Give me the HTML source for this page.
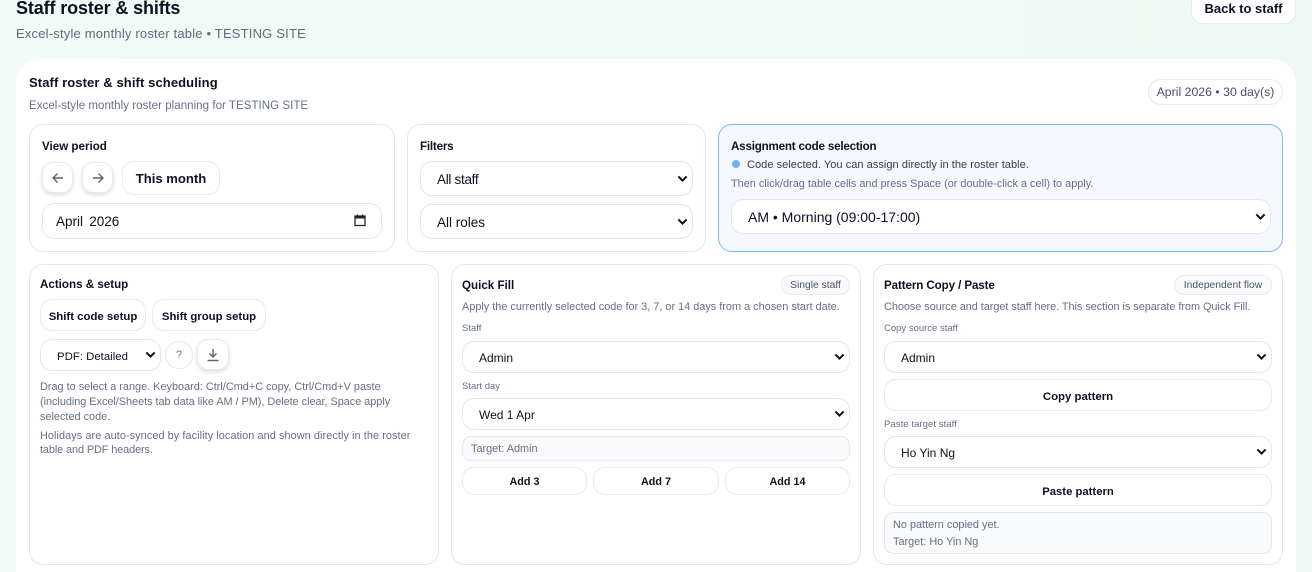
<!DOCTYPE html>
<html><head><meta charset="utf-8"><style>
html,body{margin:0;padding:0;width:1312px;height:572px;overflow:hidden;background:#eff9f6;font-family:"Liberation Sans",sans-serif;color:#0b1220}
#w{position:absolute;left:0;top:0;width:1312px;height:572px;overflow:hidden;background:linear-gradient(90deg,#f1fbf8,#edf9f4)}
.a,.t,.b,.s{position:absolute;box-sizing:border-box}
.t{white-space:nowrap;line-height:16px}
.card{position:absolute;box-sizing:border-box;background:#fff;border:1px solid #e6e8ed;border-radius:14px}
.b{background:#fff;border:1px solid #e8eaef;text-align:center;white-space:nowrap;font-weight:600}
.s{background:#fff;border:1px solid #e6e8ed;white-space:nowrap}
.s svg{position:absolute;top:50%;margin-top:-4px;right:4px;width:11px;height:7.500px}
.h{font-size:11.600px;font-weight:700;color:#0b1220}
.m{font-size:10.900px;color:#667085}
.l{font-size:9.500px;color:#667085}
.p{background:#f9fafb;font-weight:400;font-size:10.300px;line-height:19px;color:#475467}
</style></head><body><div id="w">
<div class="t" style="left:16px;top:-3px;font-size:18px;line-height:22px;font-weight:700;letter-spacing:-.13px;color:#0b1220">Staff roster &amp; shifts</div>
<div class="t" style="left:16px;top:26px;font-size:13px;letter-spacing:.19px;color:#5f6b7a">Excel-style monthly roster table • TESTING SITE</div>
<div class="b" style="left:1191px;top:-10px;width:105px;height:34px;border-radius:12px;font-size:13px;line-height:35px">Back to staff</div>

<div class="a" style="left:16px;top:59px;width:1280px;height:513px;background:#fff;border-radius:24px 24px 0 0"></div>
<div class="t" style="left:29px;top:75px;font-size:13px;letter-spacing:.1px;font-weight:700">Staff roster &amp; shift scheduling</div>
<div class="t" style="left:29px;top:98px;font-size:11.500px;letter-spacing:.05px;color:#667085">Excel-style monthly roster planning for TESTING SITE</div>
<div class="b" style="left:1148px;top:79px;width:135px;height:26px;border-radius:13px;font-size:12.300px;line-height:25px;font-weight:400;color:#475467">April 2026 • 30 day(s)</div>

<div class="card" style="left:29px;top:124px;width:366px;height:128px"></div>
<div class="t h" style="left:42px;top:139px">View period</div>
<div class="b" style="left:42px;top:162px;width:31px;height:31px;border-radius:11px;box-shadow:0 2px 4px rgba(16,24,40,.14)"><svg width="14" height="14" viewBox="0 0 14 14" style="position:absolute;left:8px;top:8px" fill="none" stroke="#5b6470" stroke-width="1.400"><path d="M12 7H2M6.500 2.500L2 7l4.500 4.500"/></svg></div>
<div class="b" style="left:82px;top:162px;width:31px;height:31px;border-radius:11px;box-shadow:0 2px 4px rgba(16,24,40,.14)"><svg width="14" height="14" viewBox="0 0 14 14" style="position:absolute;left:8px;top:8px" fill="none" stroke="#5b6470" stroke-width="1.400"><path d="M2 7h10M7.500 2.500L12 7l-4.500 4.500"/></svg></div>
<div class="b" style="left:122px;top:161px;width:98px;height:34px;border-radius:12px;font-size:13.100px;line-height:33px">This month</div>
<div class="s" style="left:42px;top:203px;width:340px;height:36px;border-radius:12px;font-size:13.500px;line-height:35px;padding-left:13px;word-spacing:2.500px">April 2026<svg viewBox="0 0 14 14" style="right:14px;margin-top:-8px;width:14px;height:14px" fill="none"><path d="M2 3h10v9.500H2z" stroke="#222" stroke-width="1.300"/><path d="M2 3h10v2.500H2z" fill="#222"/><path d="M4.500 1.500v2M9.500 1.500v2" stroke="#222" stroke-width="1.200"/></svg></div>

<div class="card" style="left:407px;top:124px;width:299px;height:128px"></div>
<div class="t h" style="left:420px;top:139px;letter-spacing:-.2px">Filters</div>
<div class="s" style="left:420px;top:161px;width:273px;height:35px;border-radius:12px;font-size:13.500px;letter-spacing:-.3px;line-height:36px;padding-left:16px">All staff<svg viewBox="0 0 12 8"><path d="M1.500 1.500L6 6l4.500-4.500" fill="none" stroke="#111" stroke-width="2.200"/></svg></div>
<div class="s" style="left:420px;top:204px;width:273px;height:35px;border-radius:12px;font-size:13.500px;line-height:35px;padding-left:16px">All roles<svg viewBox="0 0 12 8"><path d="M1.500 1.500L6 6l4.500-4.500" fill="none" stroke="#111" stroke-width="2.200"/></svg></div>

<div class="a" style="left:718px;top:124px;width:565px;height:128px;background:#f5f9fe;border:1px solid #7bb8f6;border-radius:14px"></div>
<div class="t h" style="left:731px;top:139px;letter-spacing:-.19px">Assignment code selection</div>
<div class="a" style="left:732px;top:160px;width:8px;height:8px;border-radius:50%;background:#6fb0f8"></div>
<div class="t" style="left:747px;top:157px;font-size:11.100px;color:#344054">Code selected. You can assign directly in the roster table.</div>
<div class="t m" style="left:731px;top:176px">Then click/drag table cells and press Space (or double-click a cell) to apply.</div>
<div class="s" style="left:731px;top:199px;width:540px;height:35px;border-radius:12px;font-size:14px;line-height:35px;padding-left:16px">AM • Morning (09:00-17:00)<svg viewBox="0 0 12 8"><path d="M1.500 1.500L6 6l4.500-4.500" fill="none" stroke="#111" stroke-width="2.200"/></svg></div>

<div class="card" style="left:29px;top:264px;width:410px;height:301px"></div>
<div class="t h" style="left:40px;top:277px">Actions &amp; setup</div>
<div class="b" style="left:40px;top:299px;width:106px;height:32px;border-radius:12px;font-size:11.400px;line-height:32px;padding-top:1px">Shift code setup</div>
<div class="b" style="left:152px;top:299px;width:114px;height:32px;border-radius:12px;font-size:11.400px;line-height:32px;padding-top:1px">Shift group setup</div>
<div class="s" style="left:40px;top:339px;width:121px;height:32px;border-radius:12px;font-size:11.400px;line-height:32px;padding-top:1px;padding-left:16px">PDF: Detailed<svg viewBox="0 0 12 8"><path d="M1.500 1.500L6 6l4.500-4.500" fill="none" stroke="#111" stroke-width="2.200"/></svg></div>
<div class="b" style="left:165px;top:341px;width:28px;height:28px;border-radius:14px;font-size:11px;line-height:27px;color:#667085;font-weight:400">?</div>
<div class="b" style="left:197px;top:339px;width:32px;height:31px;border-radius:11px;box-shadow:0 2px 4px rgba(16,24,40,.14)"><svg width="14" height="14" viewBox="0 0 14 14" style="position:absolute;left:8px;top:8px" fill="none" stroke="#5b6470" stroke-width="1.400"><path d="M7 1v8M3.500 5.500L7 9l3.500-3.500M1.500 12.500h11"/></svg></div>
<div class="t m" style="left:40px;top:379px">Drag to select a range. Keyboard: Ctrl/Cmd+C copy, Ctrl/Cmd+V paste</div>
<div class="t m" style="left:40px;top:394px;letter-spacing:-.03px">(including Excel/Sheets tab data like AM / PM), Delete clear, Space apply</div>
<div class="t m" style="left:40px;top:409px">selected code.</div>
<div class="t m" style="left:40px;top:428px;letter-spacing:.07px">Holidays are auto-synced by facility location and shown directly in the roster</div>
<div class="t m" style="left:40px;top:442px;letter-spacing:-.1px">table and PDF headers.</div>

<div class="card" style="left:451px;top:264px;width:410px;height:301px"></div>
<div class="t h" style="left:462px;top:278px">Quick Fill</div>
<div class="b p" style="left:781px;top:275px;width:69px;height:20px;border-radius:10px">Single staff</div>
<div class="t m" style="left:462px;top:299px">Apply the currently selected code for 3, 7, or 14 days from a chosen start date.</div>
<div class="t l" style="left:462px;top:321px">Staff</div>
<div class="s" style="left:462px;top:341px;width:388px;height:32px;border-radius:12px;font-size:12px;line-height:32px;padding-left:16px">Admin<svg viewBox="0 0 12 8"><path d="M1.500 1.500L6 6l4.500-4.500" fill="none" stroke="#111" stroke-width="2.200"/></svg></div>
<div class="t l" style="left:462px;top:379px">Start day</div>
<div class="s" style="left:462px;top:398px;width:388px;height:32px;border-radius:12px;font-size:12px;line-height:32px;padding-left:16px">Wed 1 Apr<svg viewBox="0 0 12 8"><path d="M1.500 1.500L6 6l4.500-4.500" fill="none" stroke="#111" stroke-width="2.200"/></svg></div>
<div class="a m" style="left:462px;top:436px;width:388px;height:25px;background:#f8fafc;border:1px solid #e6e8ed;border-radius:9px;line-height:24px;padding-left:8px">Target: Admin</div>
<div class="b" style="left:462px;top:467px;width:125px;height:28px;border-radius:12px;font-size:10.800px;line-height:28px">Add 3</div>
<div class="b" style="left:593px;top:467px;width:126px;height:28px;border-radius:12px;font-size:10.800px;line-height:28px">Add 7</div>
<div class="b" style="left:725px;top:467px;width:125px;height:28px;border-radius:12px;font-size:10.800px;line-height:28px">Add 14</div>

<div class="card" style="left:873px;top:264px;width:410px;height:301px"></div>
<div class="t h" style="left:884px;top:278px;letter-spacing:-.1px">Pattern Copy / Paste</div>
<div class="b p" style="left:1174px;top:275px;width:98px;height:20px;border-radius:10px">Independent flow</div>
<div class="t m" style="left:884px;top:299px;letter-spacing:-.04px">Choose source and target staff here. This section is separate from Quick Fill.</div>
<div class="t l" style="left:884px;top:321px">Copy source staff</div>
<div class="s" style="left:884px;top:341px;width:388px;height:32px;border-radius:12px;font-size:12px;line-height:32px;padding-left:16px">Admin<svg viewBox="0 0 12 8"><path d="M1.500 1.500L6 6l4.500-4.500" fill="none" stroke="#111" stroke-width="2.200"/></svg></div>
<div class="b" style="left:884px;top:379px;width:388px;height:32px;border-radius:12px;font-size:11.400px;line-height:32px;padding-top:1px">Copy pattern</div>
<div class="t l" style="left:884px;top:417px;letter-spacing:.07px">Paste target staff</div>
<div class="s" style="left:884px;top:436px;width:388px;height:32px;border-radius:12px;font-size:12px;line-height:32px;padding-left:16px">Ho Yin Ng<svg viewBox="0 0 12 8"><path d="M1.500 1.500L6 6l4.500-4.500" fill="none" stroke="#111" stroke-width="2.200"/></svg></div>
<div class="b" style="left:884px;top:474px;width:388px;height:32px;border-radius:12px;font-size:11.300px;line-height:32px;padding-top:1px">Paste pattern</div>
<div class="a m" style="left:884px;top:512px;width:388px;height:42px;background:#f8fafc;border:1px solid #e6e8ed;border-radius:9px;line-height:17px;padding:4px 8px 0">No pattern copied yet.<br>Target: Ho Yin Ng</div>
</div></body></html>
